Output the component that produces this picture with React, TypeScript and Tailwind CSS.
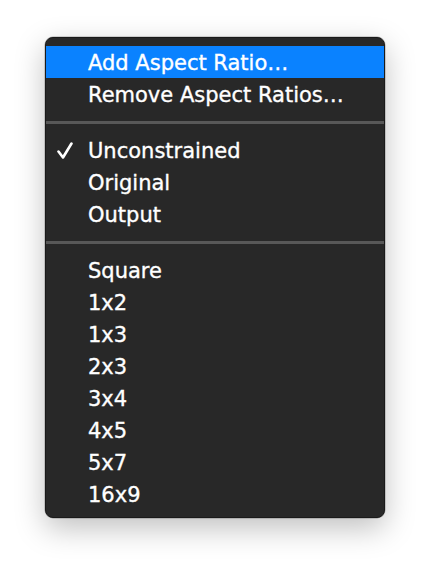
import React from "react";

const Row = ({ label, checked, active }: { label: string; checked?: boolean; active?: boolean }) => (
  <div className={`relative h-[32px] flex items-center pl-[42px] ${active ? "bg-[#0a82ff]" : ""}`}>
    {checked && (
      <svg className="absolute left-[11px] top-[8px]" width="16" height="17" viewBox="0 0 16 17">
        <path d="M1.5 9.5 L6 15.5 L14.5 1.5" fill="none" stroke="white" strokeWidth="2.6" strokeLinecap="round" strokeLinejoin="round" />
      </svg>
    )}
    <span className="pt-[3px] [-webkit-text-stroke:0.35px_white]">{label}</span>
  </div>
);

const Sep = () => (
  <div className="h-[24px] flex flex-col">
    <div className="h-[11px]" />
    <div className="h-[3px] bg-[#585858]" />
  </div>
);

export default function App() {
  return (
    <div className="w-[430px] h-[572px] bg-white pt-[37px] pl-[45px]">
      <div
        className="w-[340px] h-[481px] rounded-[8px] bg-[#282828] border border-[#1a1a1a] pt-[8px] text-white text-[21px] overflow-hidden shadow-[0_10px_30px_rgba(0,0,0,0.25),0_0_0_0.5px_rgba(0,0,0,0.3)]"
        style={{ fontFamily: '"DejaVu Sans", sans-serif' }}
      >
        <Row label="Add Aspect Ratio…" active />
        <Row label="Remove Aspect Ratios…" />
        <Sep />
        <Row label="Unconstrained" checked />
        <Row label="Original" />
        <Row label="Output" />
        <Sep />
        <Row label="Square" />
        <Row label="1x2" />
        <Row label="1x3" />
        <Row label="2x3" />
        <Row label="3x4" />
        <Row label="4x5" />
        <Row label="5x7" />
        <Row label="16x9" />
      </div>
    </div>
  );
}
